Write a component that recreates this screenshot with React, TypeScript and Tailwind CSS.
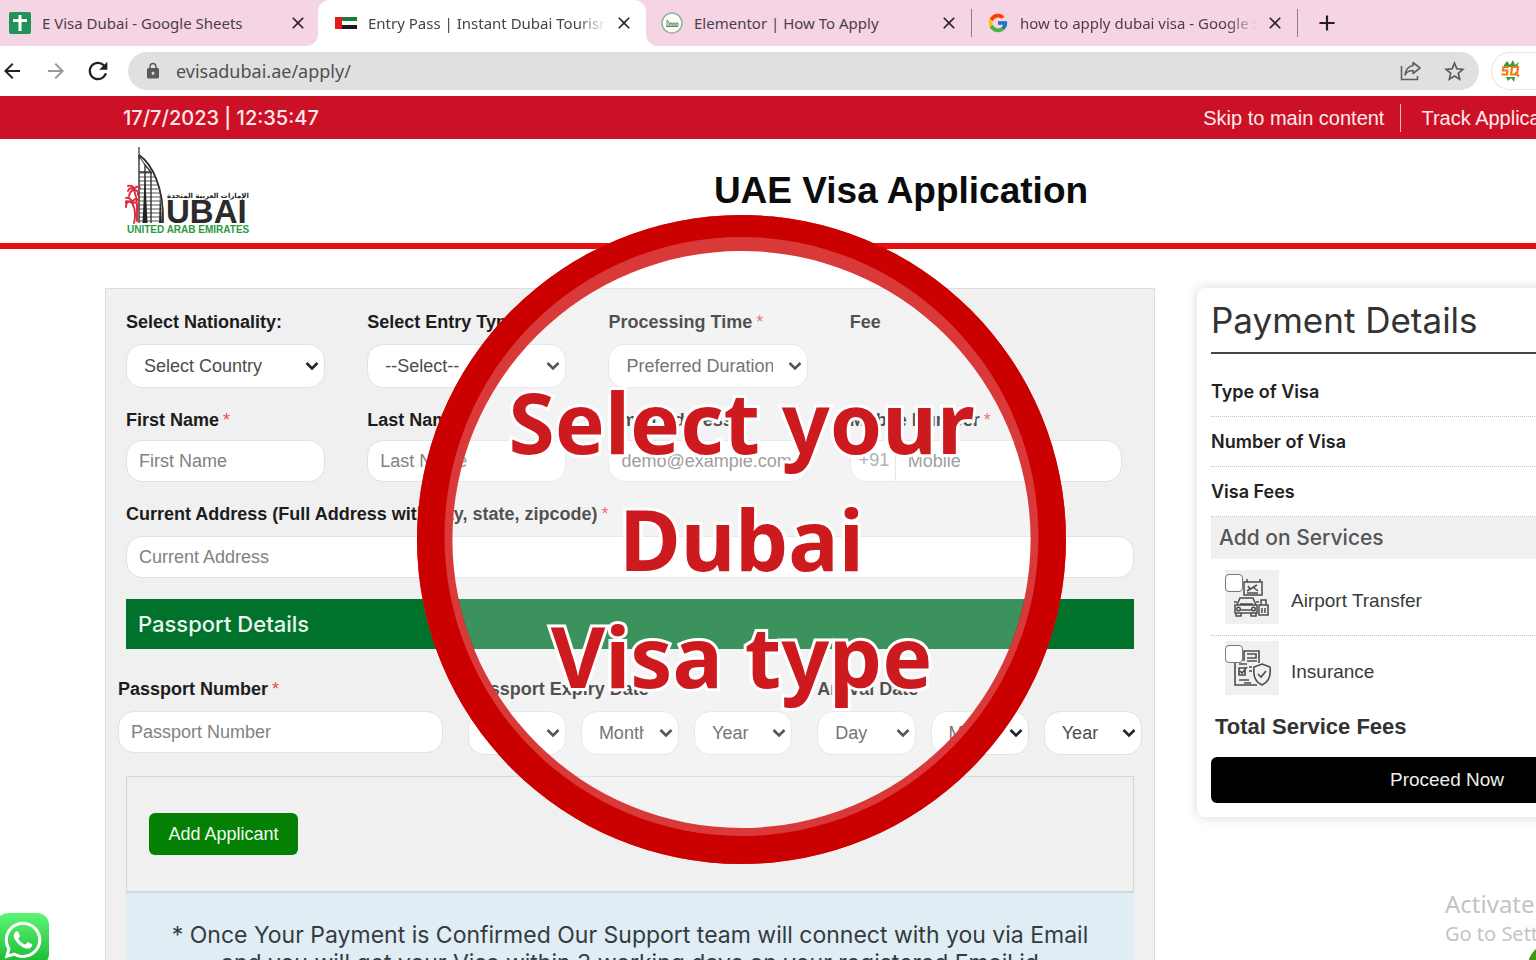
import type { ReactNode } from "react";
import { FaWhatsapp } from "react-icons/fa";
import { FcGoogle } from "react-icons/fc";
import { MdArrowBack, MdArrowForward, MdClose, MdAdd, MdLock, MdRefresh, MdStarBorder } from "react-icons/md";

interface TabProps {
  title: string;
  icon: ReactNode;
  active?: boolean;
  faded?: boolean;
  className: string;
}

const Tab = ({ title, icon, active, faded, className }: TabProps) => (
  <div className={`flex items-center h-full shrink-0 ${active ? "bg-white rounded-t-xl" : ""} ${className}`}>
    <span className="w-6 flex justify-center shrink-0">{icon}</span>
    <span
      className={`flex-1 ml-2.5 overflow-hidden whitespace-nowrap text-[15px] text-[#4a3f48] ${
        faded ? "[mask-image:linear-gradient(to_right,black_88%,transparent)]" : ""
      }`}
    >
      {title}
    </span>
    <button type="button" aria-label="Close tab" className="ml-2 shrink-0 text-[#2c262a]">
      <MdClose size={20} />
    </button>
  </div>
);

const SheetsIcon = () => (
  <svg width="22" height="22" viewBox="0 0 22 22">
    <rect width="22" height="22" rx="2" fill="#20935a" />
    <path d="M11 3v16M4 8.5h14" stroke="#fff" strokeWidth="3" />
  </svg>
);

const FlagIcon = () => (
  <svg width="22" height="12" viewBox="0 0 22 12">
    <rect width="22" height="12" fill="#fff" />
    <rect width="22" height="4" fill="#1c7a3a" />
    <rect y="8" width="22" height="4" fill="#1b1b1b" />
    <rect width="7" height="12" fill="#e21a1a" />
  </svg>
);

const BadgeIcon = () => (
  <svg width="22" height="22" viewBox="0 0 22 22">
    <circle cx="11" cy="11" r="10" fill="#fff" stroke="#8fb593" strokeWidth="1.5" />
    <path d="M6 14V8l2 2v4M9 14v-3h2v3M12 14v-3h2v3M15 14v-3h2v3M5 14.5h12" stroke="#5c8a60" fill="none" />
  </svg>
);

const ShareIcon = () => (
  <svg width="22" height="20" viewBox="0 0 22 20" fill="none" stroke="#5f5f5f" strokeWidth="1.6">
    <path d="M1.5 5v13.5h16V15" />
    <path d="M13 1.5l7 5.500-7 5.500V9.500c-4 0-6.500 1.500-8 4.500.5-5 3-8.500 8-9.500z" strokeLinejoin="round" />
  </svg>
);

const ExtensionIcon = () => (
  <svg width="22" height="24" viewBox="0 0 22 24">
    <path d="M4 6l3-4 3 4 3-5 2 5 4-3-2 5H4zM6 18l2 4 3-3 3 4 1-5z" fill="#3d9a3a" />
    <path d="M9 8H3.500L3 11.500h4.500L7 15.500H1.500M12 8h6l-1 7.500h-6zM15 13.500l4 4" stroke="#ee7d22" strokeWidth="2.200" fill="none" />
  </svg>
);

const Logo = () => (
  <svg width="126" height="92" viewBox="0 0 126 92" role="img" aria-label="Dubai, United Arab Emirates">
    <path d="M14 14V2" stroke="#333" strokeWidth="1.2" />
    <path d="M14 10C27 19 39 42 38 78" fill="none" stroke="#2b2b2b" strokeWidth="1.800" />
    <path
      d="M14 11L20 20M14 28h13M14 32h16M14 36h18M14 40h19M14 44h21M14 48h22M14 52h22M14 56h23M14 60h24M14 64h24M14 68h24M14 72h24M14 76h24"
      fill="none"
      stroke="#555"
      strokeWidth="1.2"
    />
    <path d="M14 10V78M14 27h12l-6-7v58M26 27V78" fill="none" stroke="#333" strokeWidth="1.400" />
    <path d="M20 28l2.500 50h-5z" fill="#222" />
    <path d="M35 46l2 32h-3z" fill="#2b2b2b" />
    <path
      d="M9 78C11 70 10 63 7 58M7 58C4 55 1 57 1 62M7 58C3 55 0 56 -1 59M7 58C7 54 3 52 1 53M7 58C9 53 13 53 14 56M7 58C12 56 13 60 13 64M9 45C7 42 4 43 3 46M9 45C6 45 5 47 4 51M9 45C9 41 6 40 3 41M9 45C10 41 13 41 15 43M9 45C13 45 13 47 13 50M9 45C11 50 12 53 12 60V76"
      fill="none"
      stroke="#dc2a3b"
      strokeWidth="1.900"
      strokeLinecap="round"
    />
    <text x="83" y="53" textAnchor="middle" fill="#222" className="font-['DejaVu_Sans',sans-serif] font-bold text-[7px]">
      الإمارات العربية المتحدة
    </text>
    <text x="41" y="78" fill="#2b2b2b" className="font-['Liberation_Sans',sans-serif] font-bold text-[33px]">UBAI</text>
    <text x="2" y="88" fill="#2c9a3f" className="font-['Liberation_Sans',sans-serif] font-bold text-[10px]">UNITED ARAB EMIRATES</text>
  </svg>
);

const Label = ({ htmlFor, children, required }: { htmlFor: string; children: ReactNode; required?: boolean }) => (
  <label htmlFor={htmlFor} className="block h-6 leading-6 text-lg font-bold text-[#1c1c1c] whitespace-nowrap">
    {children}
    {required && <span className="ml-1 font-normal text-[#ee4a4a]">*</span>}
  </label>
);

const Select = ({ id, value, label }: { id: string; value: string; label?: string }) => (
  <div className="relative">
    <select
      id={id}
      aria-label={label}
      className="appearance-none w-full h-11 pl-[17px] pr-[34px] rounded-2xl border border-[#e2e2e2] bg-white text-lg text-[#4c4c4c]"
    >
      <option>{value}</option>
    </select>
    <svg width="14" height="10" viewBox="0 0 14 10" className="absolute right-1.5 top-[17px] pointer-events-none">
      <path d="M1.500 2L7 7.500L12.500 2" fill="none" stroke="#222" strokeWidth="2.600" />
    </svg>
  </div>
);

const TextInput = ({ id, placeholder, type = "text" }: { id: string; placeholder: string; type?: string }) => (
  <input
    id={id}
    type={type}
    placeholder={placeholder}
    className="block w-full h-[42px] px-3 rounded-2xl border border-[#e2e2e2] bg-white text-lg placeholder:text-[#828282]"
  />
);

const DateField = ({ id, label }: { id: string; label: string }) => (
  <div>
    <Label htmlFor={`${id}-day`}>{label}</Label>
    <div className="grid grid-cols-3 gap-[15px] mt-2.5">
      <Select id={`${id}-day`} value="Day" />
      <Select id={`${id}-month`} value="Month" label={`${label} month`} />
      <Select id={`${id}-year`} value="Year" label={`${label} year`} />
    </div>
  </div>
);

const TransferIcon = () => (
  <svg width="42" height="42" viewBox="0 0 42 42" fill="none" stroke="#4c4c4c" strokeWidth="1.500">
    <path d="M13 6h18v13H13zM16 6V3M29 6V3M16 15l10-6M19 13l-2-3M22 11l5 4M16 17h11" />
    <path d="M6 29l3-7h13l3 7M4 29h22v8H4zM5 37v3h5v-3M20 37v3h5v-3M10 34h10M6 26h-3M25 26h3M9 28h13" />
    <circle cx="7.500" cy="33" r="1.800" />
    <circle cx="22.500" cy="33" r="1.800" />
    <path d="M28 29h9v10h-9zM30 29v-5h5v5M31 32v5M34 32v5" />
  </svg>
);

const InsuranceIcon = () => (
  <svg width="42" height="42" viewBox="0 0 42 42" fill="none" stroke="#4c4c4c" strokeWidth="1.600">
    <path d="M28 16V4H13v9H4v25h22M16 7h9v4h-9M16 14h10M8 17h8M8 21h6v7H8zM9 24l2 2 5-6M18 20h3M18 24h3M8 33h10M13 36h7" />
    <path d="M31 17l8 3c1 8-1 15-8 18-7-3-9-10-8-18z" />
    <path d="M27 27l3 3 5-6" />
  </svg>
);

const SummaryRow = ({ children }: { children: ReactNode }) => (
  <div className="h-[50px] flex items-center border-b border-dotted border-[#c4c4c4] font-[Inter,sans-serif] text-lg font-semibold text-[#222]">
    {children}
  </div>
);

const ServiceRow = ({ id, label, icon }: { id: string; label: string; icon: ReactNode }) => (
  <div className="flex items-center pl-3.5">
    <div className="relative size-[54px] bg-[#f0f0f0] flex items-end justify-center pb-1.5">
      {icon}
      <input
        id={id}
        type="checkbox"
        className="absolute left-0 top-1 appearance-none size-[18px] rounded-sm border border-[#777] bg-white"
      />
    </div>
    <label htmlFor={id} className="ml-3 mt-2 text-[19px] text-[#3a3a3a]">{label}</label>
  </div>
);

const BrowserChrome = () => (
  <div className="font-['Noto_Sans',sans-serif]">
    <div className="flex h-[46px] bg-[#f5d4e4]">
      <div className="bg-white">
        <div className="h-full bg-[#f5d4e4] rounded-br-xl">
          <Tab className="w-[318px] pl-2 pr-2.5" title="E Visa Dubai - Google Sheets" icon={<SheetsIcon />} />
        </div>
      </div>
      <Tab className="w-[328px] pl-4 pr-3" active faded title="Entry Pass | Instant Dubai Tourism" icon={<FlagIcon />} />
      <div className="bg-white">
        <div className="h-full bg-[#f5d4e4] rounded-bl-xl">
          <Tab className="w-[325px] pl-3.5 pr-3" title="Elementor | How To Apply" icon={<BadgeIcon />} />
        </div>
      </div>
      <span className="w-px h-7 self-center bg-[#8d7d86]" />
      <Tab className="w-[325px] pl-3.5 pr-3" faded title="how to apply dubai visa - Google Search" icon={<FcGoogle size={22} />} />
      <span className="w-px h-7 self-center bg-[#8d7d86]" />
      <button type="button" aria-label="New tab" className="ml-4 text-[#221d20]">
        <MdAdd size={26} />
      </button>
    </div>
    <div className="flex items-center h-[50px] bg-white text-[#222]">
      <button type="button" aria-label="Back"><MdArrowBack size={24} /></button>
      <button type="button" aria-label="Forward" className="ml-5 text-[#999]"><MdArrowForward size={24} /></button>
      <button type="button" aria-label="Reload" className="ml-4"><MdRefresh size={28} /></button>
      <div className="flex-1 flex items-center ml-4 h-[38px] pl-4 pr-3 rounded-full bg-[#e0e0e0] text-[#5a5a5a]">
        <MdLock size={18} />
        <input
          aria-label="Address"
          defaultValue="evisadubai.ae/apply/"
          className="flex-1 ml-3.5 bg-transparent text-lg text-[#505050]"
        />
        <ShareIcon />
        <MdStarBorder size={25} className="ml-5" />
      </div>
      <div className="flex items-center w-[45px] h-[38px] ml-3 pl-2 rounded-l-full border border-r-0 border-[#e4e4ea]">
        <ExtensionIcon />
      </div>
    </div>
  </div>
);

const fieldGrid =
  "grid grid-cols-[minmax(0,199fr)_minmax(0,199fr)_minmax(0,199fr)_minmax(0,284fr)] gap-x-[42px]";

const ApplicationForm = () => (
  <form className="border border-[#dcdcdc] bg-[#f0f0f0] px-5 pt-[21px]">
    <div className={fieldGrid}>
      <div>
        <Label htmlFor="nationality">Select Nationality:</Label>
        <div className="mt-2.5"><Select id="nationality" value="Select Country" /></div>
      </div>
      <div>
        <Label htmlFor="entry">Select Entry Type:</Label>
        <div className="mt-2.5"><Select id="entry" value="--Select--" /></div>
      </div>
      <div>
        <Label htmlFor="processing" required>Processing Time</Label>
        <div className="mt-2.5"><Select id="processing" value="Preferred Duration" /></div>
      </div>
      <span className="h-6 leading-6 text-lg font-bold text-[#1c1c1c]">Fee</span>
    </div>
    <div className={`${fieldGrid} mt-5`}>
      <div>
        <Label htmlFor="first-name" required>First Name</Label>
        <div className="mt-2"><TextInput id="first-name" placeholder="First Name" /></div>
      </div>
      <div>
        <Label htmlFor="last-name" required>Last Name</Label>
        <div className="mt-2"><TextInput id="last-name" placeholder="Last Name" /></div>
      </div>
      <div>
        <Label htmlFor="email" required>Email Address</Label>
        <div className="mt-2"><TextInput id="email" type="email" placeholder="demo@example.com" /></div>
      </div>
      <div>
        <Label htmlFor="mobile" required>Mobile Number</Label>
        <div className="flex items-center mt-2 mr-3 h-[42px] rounded-2xl border border-[#e2e2e2] bg-white text-lg overflow-hidden">
          <span className="w-[45px] h-full pl-2 leading-[38px] border-r border-[#e2e2e2] text-[#999]">+91</span>
          <input id="mobile" type="tel" placeholder="Mobile" className="flex-1 min-w-0 pl-3 placeholder:text-[#828282]" />
        </div>
      </div>
    </div>
    <div className="mt-5">
      <Label htmlFor="address" required>Current Address (Full Address with city, state, zipcode)</Label>
      <div className="mt-2.5"><TextInput id="address" placeholder="Current Address" /></div>
    </div>
    <h2 className="mt-[21px] h-[50px] pl-3 flex items-center bg-[#00722c] font-[Inter,sans-serif] text-[22px] font-medium text-[#eaf6ee]">
      Passport Details
    </h2>
    <div className="grid grid-cols-3 gap-x-[25px] -mx-2 mt-7">
      <div>
        <Label htmlFor="passport" required>Passport Number</Label>
        <div className="mt-2.5"><TextInput id="passport" placeholder="Passport Number" /></div>
      </div>
      <DateField id="expiry" label="Passport Expiry Date" />
      <DateField id="arrival" label="Arrival Date" />
    </div>
    <div className="mt-[21px] border border-b-2 border-[#d6d6d6] px-[22px] pt-9 pb-9">
      <button type="button" className="h-[42px] w-[149px] rounded-md bg-[#048004] text-lg text-[#effbef]">
        Add Applicant
      </button>
    </div>
    <p className="bg-[#e0edf4] pt-7 pb-7 text-center font-[Inter,sans-serif] text-[23px] leading-7 text-[#333c40] whitespace-nowrap">
      * Once Your Payment is Confirmed Our Support team will connect with you via Email
      <br />
      and you will get your Visa within 3 working days on your registered Email id
    </p>
  </form>
);

const PaymentDetails = () => (
  <aside className="self-start rounded-lg bg-white px-3.5 pb-3.5 shadow-[0_0_12px_rgba(0,0,0,0.16)]">
    <h2 className="h-[66px] flex items-center border-b-2 border-[#444] font-[Inter,sans-serif] text-[35px] text-[#333]">
      Payment Details
    </h2>
    <div className="pt-[13px]">
      <SummaryRow>Type of Visa</SummaryRow>
      <SummaryRow>Number of Visa</SummaryRow>
      <SummaryRow>Visa Fees</SummaryRow>
    </div>
    <h3 className="h-[42px] pl-2 flex items-center bg-[#f0f0f0] font-[Inter,sans-serif] text-[21px] font-medium text-[#555]">
      Add on Services
    </h3>
    <div className="py-[11px] border-b border-dotted border-[#c4c4c4]">
      <ServiceRow id="transfer" label="Airport Transfer" icon={<TransferIcon />} />
    </div>
    <div className="pt-[5px]">
      <ServiceRow id="insurance" label="Insurance" icon={<InsuranceIcon />} />
    </div>
    <p className="h-[62px] flex items-center pl-1 text-[22px] font-bold text-[#333]">Total Service Fees</p>
    <button type="button" className="w-full h-[46px] rounded-md bg-black text-[19px] text-[#eee]">Proceed Now</button>
  </aside>
);

// Magnifier ring laid over the form, with the headline inside it
const Spotlight = () => (
  <div className="absolute left-[417px] top-[215px] size-[649px] pointer-events-none">
    <svg viewBox="0 0 649 649" className="size-full">
      <circle cx="324.500" cy="324.500" r="289" fill="#fff" fillOpacity="0.230" />
      <path
        d="M324.500 0a324.500 324.500 0 1 0 0 649a324.500 324.500 0 1 0 0-649zM324.500 36a289 288.500 0 1 1 0 577a289 288.500 0 1 1 0-577z"
        fill="#d93939"
        fillRule="evenodd"
      />
      <path
        d="M324.500 0a324.500 324.500 0 1 0 0 649a324.500 324.500 0 1 0 0-649zM324.500 22a297 299.500 0 1 1 0 599a297 299.500 0 1 1 0-599z"
        fill="#cb0000"
        fillRule="evenodd"
      />
    </svg>
    <p className="absolute inset-x-0 top-[148px] text-center font-['Noto_Sans',sans-serif] font-bold text-[84px] leading-[117px] text-[#cc1a1e] [-webkit-text-stroke:6px_white] [paint-order:stroke_fill]">
      Select your
      <br />
      Dubai
      <br />
      Visa type
    </p>
  </div>
);

export default function App() {
  return (
    <div className="relative h-screen overflow-hidden bg-white font-['Liberation_Sans',Arial,sans-serif]">
      <BrowserChrome />
      <div className="w-[calc(100%+266px)]">
        <div className="flex items-center h-[43px] px-[123px] bg-[#cc1126] text-[#ffe9ec]">
          <time className="font-[Inter,sans-serif] text-xl font-medium">17/7/2023 | 12:35:47</time>
          <nav className="flex items-center ml-auto mr-[106px] text-xl">
            <a href="#main">Skip to main content</a>
            <span className="w-px h-7 ml-4 mr-5 bg-[#f0b8bf]" />
            <a href="#track">Track Application</a>
          </nav>
        </div>
        <header className="h-[110px] border-b-6 border-[#e30f10] px-[125px] flex items-center">
          <Logo />
          <h1 className="flex-1 mr-[126px] text-center text-[37px] font-bold text-[#0c0c0c]">UAE Visa Application</h1>
        </header>
        <main id="main" className="grid grid-cols-[1050fr_500fr] gap-[42px] px-[105px] pt-[39px]">
          <ApplicationForm />
          <PaymentDetails />
        </main>
      </div>
      <Spotlight />
      <a
        href="#whatsapp"
        aria-label="WhatsApp"
        className="absolute -left-1 -bottom-1.5 size-[53px] rounded-xl flex items-center justify-center bg-linear-to-b from-[#5bf675] to-[#12b72d] text-white"
      >
        <FaWhatsapp size={42} />
      </a>
      <div className="absolute left-[1445px] bottom-3 whitespace-nowrap font-['Noto_Sans',sans-serif] text-[#c4c4c4]">
        <p className="text-2xl leading-8">Activate Windows</p>
        <p className="text-xl leading-7">Go to Settings to activate Windows.</p>
      </div>
      <span className="absolute -right-9 -bottom-7 size-11 rounded-full bg-[#3c9a12]" />
    </div>
  );
}
